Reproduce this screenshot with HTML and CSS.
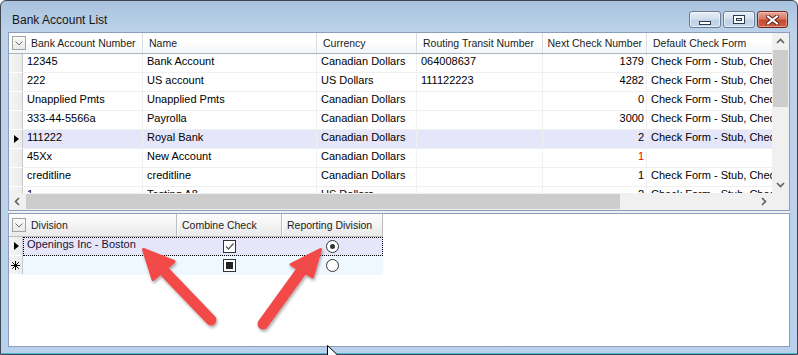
FILE: index.html
```html
<!DOCTYPE html>
<html>
<head>
<meta charset="utf-8">
<title>Bank Account List</title>
<link rel="stylesheet" href="styles.css">
</head>
<body>
<div class="window">
  <div class="titlebar">
    <span class="title">Bank Account List</span>
    <div class="caps">
      <div class="cbtn"><span class="ico-min"></span></div>
      <div class="cbtn"><span class="ico-max"><span class="ico-max-in"></span></span></div>
      <div class="cbtn close">
        <svg width="13" height="10" viewBox="0 0 13 10"><path d="M2 1.5 L11 8.5 M11 1.5 L2 8.5" stroke="#5b2016" stroke-width="4" stroke-linecap="square"/><path d="M2 1.5 L11 8.5 M11 1.5 L2 8.5" stroke="#fff" stroke-width="2" stroke-linecap="square"/></svg>
      </div>
    </div>
  </div>
  <div class="client">
    <div class="pane upper">
      <div class="up-main">
        <div class="vp">
          <div class="hdr">
            <div class="hc hc-first uw-h1"><span class="chooser"><svg width="12" height="12" viewBox="0 0 12 12"><path d="M2.5 4.5 L6 8 L9.5 4.5" fill="none" stroke="#6d6d6d" stroke-width="1"/></svg></span><span>Bank Account Number</span></div>
            <div class="hc uw2">Name</div>
            <div class="hc uw3">Currency</div>
            <div class="hc uw4">Routing Transit Number</div>
            <div class="hc uw5 right">Next Check Number</div>
            <div class="hc uw6">Default Check Form</div>
          </div>
          <div class="row">
            <div class="rh"></div><div class="c uw1">12345</div><div class="c uw2">Bank Account</div><div class="c uw3">Canadian Dollars</div><div class="c uw4">064008637</div><div class="c uw5 right">1379</div><div class="c uw6">Check Form - Stub, Cheque</div>
          </div>
          <div class="row">
            <div class="rh"></div><div class="c uw1">222</div><div class="c uw2">US account</div><div class="c uw3">US Dollars</div><div class="c uw4">111122223</div><div class="c uw5 right">4282</div><div class="c uw6">Check Form - Stub, Cheque</div>
          </div>
          <div class="row">
            <div class="rh"></div><div class="c uw1">Unapplied Pmts</div><div class="c uw2">Unapplied Pmts</div><div class="c uw3">Canadian Dollars</div><div class="c uw4"></div><div class="c uw5 right">0</div><div class="c uw6">Check Form - Stub, Cheque</div>
          </div>
          <div class="row">
            <div class="rh"></div><div class="c uw1">333-44-5566a</div><div class="c uw2">Payrolla</div><div class="c uw3">Canadian Dollars</div><div class="c uw4"></div><div class="c uw5 right">3000</div><div class="c uw6">Check Form - Stub, Cheque</div>
          </div>
          <div class="row sel">
            <div class="rh"><span class="tri"></span></div><div class="c uw1">111222</div><div class="c uw2">Royal Bank</div><div class="c uw3">Canadian Dollars</div><div class="c uw4"></div><div class="c uw5 right">2</div><div class="c uw6">Check Form - Stub, Cheque</div>
          </div>
          <div class="row">
            <div class="rh"></div><div class="c uw1">45Xx</div><div class="c uw2">New Account</div><div class="c uw3">Canadian Dollars</div><div class="c uw4"></div><div class="c uw5 right red">1</div><div class="c uw6"></div>
          </div>
          <div class="row">
            <div class="rh"></div><div class="c uw1">creditline</div><div class="c uw2">creditline</div><div class="c uw3">Canadian Dollars</div><div class="c uw4"></div><div class="c uw5 right">1</div><div class="c uw6">Check Form - Stub, Cheque</div>
          </div>
          <div class="row">
            <div class="rh"></div><div class="c uw1">1</div><div class="c uw2">Testing A8</div><div class="c uw3">US Dollars</div><div class="c uw4"></div><div class="c uw5 right">2</div><div class="c uw6">Check Form - Stub, Cheque</div>
          </div>
        </div>
        <div class="vscroll">
          <div class="sarrow"><svg width="17" height="17" viewBox="0 0 17 17"><path d="M5 10 L8.5 6.5 L12 10" fill="none" stroke="#606060" stroke-width="1.6"/></svg></div>
          <div class="vthumb"></div>
          <div class="vtrack"></div>
          <div class="sarrow"><svg width="17" height="17" viewBox="0 0 17 17"><path d="M5 7 L8.5 10.5 L12 7" fill="none" stroke="#606060" stroke-width="1.6"/></svg></div>
        </div>
      </div>
      <div class="hscroll">
        <div class="sarrow"><svg width="17" height="17" viewBox="0 0 17 17"><path d="M10 5 L6.5 8.5 L10 12" fill="none" stroke="#606060" stroke-width="1.6"/></svg></div>
        <div class="hthumb"></div>
        <div class="htrack"></div>
        <div class="sarrow"><svg width="17" height="17" viewBox="0 0 17 17"><path d="M7 5 L10.5 8.5 L7 12" fill="none" stroke="#606060" stroke-width="1.6"/></svg></div>
        <div class="corner"></div>
      </div>
    </div>
    <div class="pane lower">
      <div class="hdr lhdr">
        <div class="hc hc-first lw-h1"><span class="chooser"><svg width="12" height="12" viewBox="0 0 12 12"><path d="M2.5 4.5 L6 8 L9.5 4.5" fill="none" stroke="#6d6d6d" stroke-width="1"/></svg></span><span>Division</span></div>
        <div class="hc lw2">Combine Check</div>
        <div class="hc lw3">Reporting Division</div>
      </div>
      <div class="lrow sel">
        <div class="rh"><span class="tri"></span></div>
        <div class="lcells">
          <div class="c lw1">Openings Inc - Boston</div>
          <div class="c lw2 mid"><span class="chk"><svg width="11" height="11" viewBox="0 0 11 11"><path d="M2 5.5 L4.5 8 L9.5 2.5" fill="none" stroke="#5a5a5a" stroke-width="1.3"/></svg></span></div>
          <div class="c lw3 mid"><span class="radio on"></span></div>
        </div>
      </div>
      <div class="lrow newrow">
        <div class="rh"><svg width="9" height="9" viewBox="0 0 9 9"><path d="M4.5 0 V9 M0 4.5 H9 M1.2 1.2 L7.8 7.8 M7.8 1.2 L1.2 7.8" stroke="#000" stroke-width="1"/></svg></div>
        <div class="lcells">
          <div class="c lw1"></div>
          <div class="c lw2 mid"><span class="chk ind"><span class="ind-sq"></span></span></div>
          <div class="c lw3 mid"><span class="radio"></span></div>
        </div>
      </div>
    </div>
  </div>
</div>
<svg class="overlay" width="798" height="355" viewBox="0 0 798 355">
  <defs>
    <filter id="sh" x="-20%" y="-20%" width="140%" height="140%">
      <feDropShadow dx="1" dy="2" stdDeviation="1.6" flood-color="#000" flood-opacity="0.35"/>
    </filter>
  </defs>
  <g filter="url(#sh)" fill="#f24848" stroke="#f24848" stroke-linejoin="round" stroke-linecap="round">
    <path d="M163 270 L211 320" stroke-width="11" fill="none"/>
    <polygon points="143.5,249.5 153,279.5 174,261.5" stroke-width="3"/>
    <path d="M302 270 L263 324" stroke-width="11" fill="none"/>
    <polygon points="320.5,249.5 291,264.5 312.5,277" stroke-width="3"/>
  </g>
  <polygon points="327.5,345.5 327.5,356 338.5,356" fill="#fff" stroke="#000" stroke-width="1"/>
</svg>
</body>
</html>
```

FILE: styles.css
```css
* { box-sizing: border-box; margin: 0; padding: 0; }
html, body { width: 798px; height: 355px; overflow: hidden; }
body {
  position: relative;
  background: #fff;
  font-family: "Liberation Sans", Arial, sans-serif;
  color: #000;
}

.window {
  width: 798px;
  height: 355px;
  border: 1px solid #3e4753;
  border-radius: 6px 6px 0 0;
  background: linear-gradient(#a9c2de 0px, #bdd3ea 32px, #b9d1ea 100%);
  padding: 0 7px 7px 7px;
  display: flex;
  flex-direction: column;
  box-shadow: inset 0 -1px 0 #4fb4d8;
}

.titlebar {
  height: 31px;
  display: flex;
  align-items: flex-start;
  flex: none;
}
.title {
  font-size: 12px;
  line-height: 14px;
  padding-top: 12px;
  padding-left: 4px;
  color: #161616;
}
.caps {
  margin-left: auto;
  margin-right: 2px;
  margin-top: 10px;
  display: flex;
  gap: 2px;
}
.cbtn {
  width: 32px;
  height: 17px;
  border: 1px solid #6b7b92;
  border-radius: 3px;
  background: linear-gradient(#e6eef8 0%, #d3e0ef 45%, #bfd0e5 55%, #c9d9ec 100%);
  box-shadow: inset 0 0 0 1px rgba(255,255,255,0.55);
  display: flex;
  align-items: center;
  justify-content: center;
}
.cbtn.close {
  width: 31px;
  border-color: #6e2a1f;
  background: linear-gradient(#e7a99b 0%, #d77866 45%, #c74a33 55%, #cf5f45 100%);
  box-shadow: inset 0 0 0 1px rgba(255,220,210,0.45);
}
.ico-min {
  width: 12px;
  height: 4px;
  margin-top: 6px;
  background: #fff;
  border: 1px solid #2d3b50;
}
.ico-max {
  width: 12px;
  height: 9px;
  border: 1px solid #2d3b50;
  background: #fff;
  display: flex;
  align-items: center;
  justify-content: center;
}
.ico-max-in {
  width: 6px;
  height: 3px;
  border: 1px solid #2d3b50;
  background: #d8e4f2;
}

.client {
  flex: 1;
  display: flex;
  flex-direction: column;
  gap: 2px;
  background: #f0f0f0;
}
.pane {
  border: 1px solid #8b9fba;
  background: #fff;
}
.upper {
  height: 179px;
  flex: none;
  display: flex;
  flex-direction: column;
}
.up-main {
  height: 160px;
  display: flex;
}
.vp {
  width: 763px;
  overflow: hidden;
}

/* header */
.hdr {
  display: flex;
  height: 21px;
  border-bottom: 1px solid #a9b6bd;
  white-space: nowrap;
}
.hc {
  flex: none;
  height: 100%;
  font-size: 10.5px;
  line-height: 20px;
  padding-left: 6px;
  color: #1b1b1b;
  background: linear-gradient(#ffffff 0%, #ffffff 45%, #f3f4f6 100%);
  border-right: 1px solid #d8dde3;
  box-shadow: inset 1px 0 0 #fff;
  display: flex;
  align-items: center;
  overflow: hidden;
}
.hc.right { justify-content: flex-end; padding-right: 4px; padding-left: 0; }
.hc-first { padding-left: 3px; }
.chooser {
  width: 14px;
  height: 14px;
  border: 1px solid #a3a3a3;
  background: linear-gradient(#fbfbfb, #e9e9e9);
  margin-right: 5px;
  display: flex;
  align-items: center;
  justify-content: center;
  flex: none;
}

.uw-h1 { width: 134px; }
.uw1 { width: 120px; }
.uw2 { width: 174px; }
.uw3 { width: 100px; }
.uw4 { width: 126px; }
.uw5 { width: 104px; }
.uw6 { width: 160px; }

.row {
  display: flex;
  height: 19px;
  white-space: nowrap;
}
.rh {
  flex: none;
  width: 14px;
  height: 100%;
  background: linear-gradient(90deg, #f6f6f6, #ebebeb);
  border-right: 1px solid #c9c9c9;
  border-bottom: 1px solid #fff;
  display: flex;
  align-items: center;
  justify-content: center;
}
.c {
  flex: none;
  height: 100%;
  font-size: 11px;
  line-height: 15px;
  padding: 0 2px 0 4px;
  border-right: 1px solid #f0f0f0;
  border-bottom: 1px solid #f0f0f0;
  overflow: hidden;
  color: #000;
}
.c.right { text-align: right; }
.c.red { color: #ff0000; }
.row.sel .c { background: #e6e6fa; }
.tri {
  width: 0;
  height: 0;
  border-left: 5px solid #000;
  border-top: 4.5px solid transparent;
  border-bottom: 4.5px solid transparent;
  margin-left: 1px;
}

/* scrollbars */
.vscroll {
  width: 17px;
  display: flex;
  flex-direction: column;
  background: #f0f0f0;
}
.sarrow {
  width: 17px;
  height: 17px;
  flex: none;
  background: #f0f0f0;
}
.sarrow svg { display: block; }
.vthumb {
  height: 57px;
  margin: 0 1px;
  background: #cdcdcd;
  flex: none;
}
.vtrack { flex: 1; }
.hscroll {
  height: 17px;
  display: flex;
  background: #f0f0f0;
}
.hthumb {
  width: 594px;
  margin: 1px 0;
  background: #cdcdcd;
  flex: none;
}
.htrack { flex: 1; }
.corner { width: 17px; flex: none; background: #f0f0f0; }

/* lower grid */
.lower {
  flex: 1;
}
.lhdr {
  height: 23px;
  border-bottom: none;
}
.lhdr .hc {
  background: linear-gradient(#fcfcfc 0%, #f4f4f4 50%, #e9e9e9 100%);
  border-right: 1px solid #bdbdbd;
  border-bottom: 1px solid #bdbdbd;
  box-shadow: inset 1px 1px 0 #fff;
  line-height: 21px;
  padding-left: 5px;
}
.lhdr .hc-first { padding-left: 3px; }
.lw-h1 { width: 168px; }
.lw1 { width: 154px; }
.lw2 { width: 105px; }
.lw3 { width: 101px; }

.lrow {
  display: flex;
  height: 19px;
  white-space: nowrap;
}
.lcells {
  display: flex;
}
.lrow.sel .lcells {
  outline: 1px dotted #000;
  outline-offset: -1px;
}
.lrow.sel .c { background: #e6e6fa; border-color: #e6e6fa; }
.lrow.newrow .c { background: #f0f8ff; border-color: #f0f8ff; }
.lrow .c.lw1 { padding-left: 4px; line-height: 14px; color: #1a1033; }
.c.mid {
  display: flex;
  align-items: center;
  justify-content: center;
  padding: 0;
}
.chk {
  width: 13px;
  height: 13px;
  border: 1px solid #333;
  background: #fff;
  display: flex;
  align-items: center;
  justify-content: center;
}
.ind-sq {
  width: 7px;
  height: 7px;
  background: #222;
}
.radio {
  width: 13px;
  height: 13px;
  border: 1px solid #333;
  border-radius: 50%;
  background: #fff;
  display: flex;
  align-items: center;
  justify-content: center;
}
.radio.on::after {
  content: "";
  width: 5px;
  height: 5px;
  border-radius: 50%;
  background: #333;
}

.overlay {
  position: absolute;
  left: 0;
  top: 0;
  pointer-events: none;
}
```
